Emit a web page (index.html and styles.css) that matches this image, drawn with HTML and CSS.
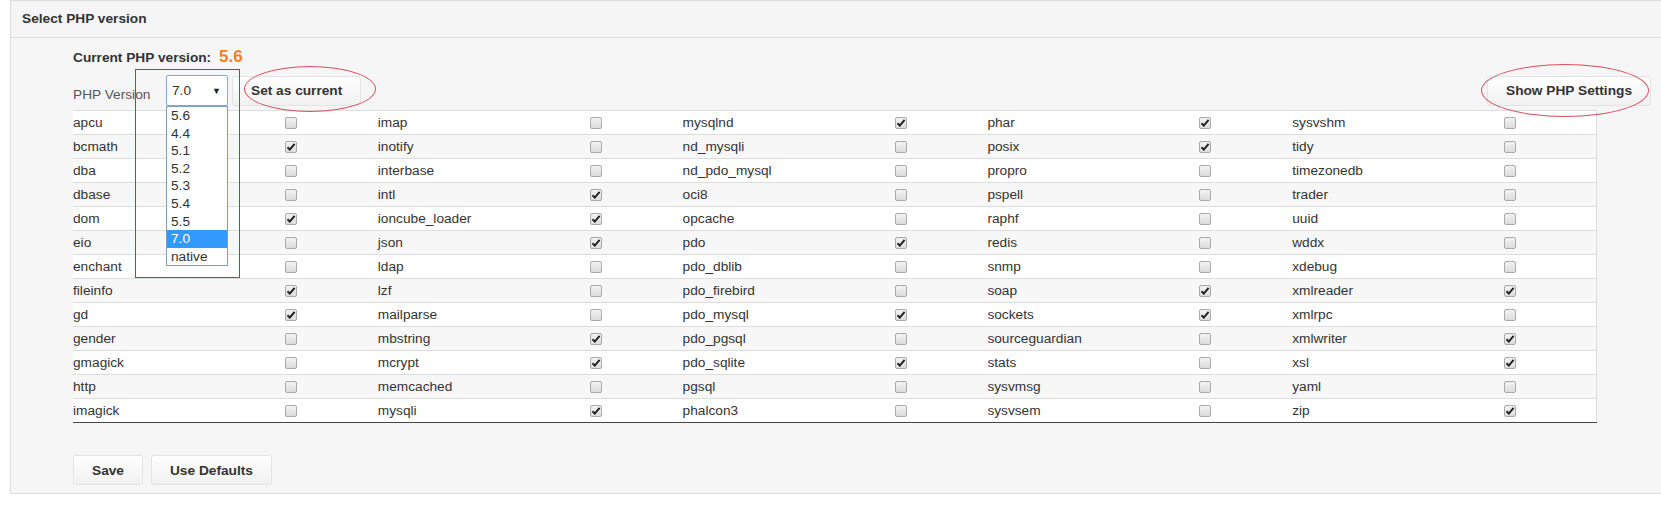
FILE: index.html
```html
<!DOCTYPE html>
<html lang="en">
<head>
  <meta charset="UTF-8">
  <meta name="viewport" content="width=device-width, initial-scale=1.0">
  <title>Select PHP version</title>
  <link rel="stylesheet" href="styles.css">
</head>
<body>
  <div class="panel">
    <div class="panelHeader">Select PHP version</div>
    <div class="panelBody">
      <div class="current">Current PHP version: <span class="currentValue">5.6</span></div>

      <div class="versionRow">
        <span class="versionLabel">PHP Version</span>
        <div class="selectBox">
          <span>7.0</span>
          <span class="arrow">&#9660;</span>
          <ul class="selectList">
            <li>5.6</li>
            <li>4.4</li>
            <li>5.1</li>
            <li>5.2</li>
            <li>5.3</li>
            <li>5.4</li>
            <li>5.5</li>
            <li class="selected">7.0</li>
            <li>native</li>
          </ul>
        </div>
        <button class="btn">Set as current</button>
        <button class="btn showSettings">Show PHP Settings</button>
        <div class="markRect"></div>
        <div class="markEllipse ellipseCurrent"></div>
        <div class="markEllipse ellipseSettings"></div>
      </div>

      <table class="extensions">
        <colgroup>
          <col class="nameCol"><col class="checkCol">
          <col class="nameCol"><col class="checkCol">
          <col class="nameCol"><col class="checkCol">
          <col class="nameCol"><col class="checkCol">
          <col class="nameCol"><col class="checkCol">
        </colgroup>
        <tbody id="extRows"></tbody>
      </table>

      <div class="actions">
        <button class="btn">Save</button>
        <button class="btn">Use Defaults</button>
      </div>
    </div>
  </div>
  <script>
    const rows = [
      [['apcu', 0], ['imap', 0], ['mysqlnd', 1], ['phar', 1], ['sysvshm', 0]],
      [['bcmath', 1], ['inotify', 0], ['nd_mysqli', 0], ['posix', 1], ['tidy', 0]],
      [['dba', 0], ['interbase', 0], ['nd_pdo_mysql', 0], ['propro', 0], ['timezonedb', 0]],
      [['dbase', 0], ['intl', 1], ['oci8', 0], ['pspell', 0], ['trader', 0]],
      [['dom', 1], ['ioncube_loader', 1], ['opcache', 0], ['raphf', 0], ['uuid', 0]],
      [['eio', 0], ['json', 1], ['pdo', 1], ['redis', 0], ['wddx', 0]],
      [['enchant', 0], ['ldap', 0], ['pdo_dblib', 0], ['snmp', 0], ['xdebug', 0]],
      [['fileinfo', 1], ['lzf', 0], ['pdo_firebird', 0], ['soap', 1], ['xmlreader', 1]],
      [['gd', 1], ['mailparse', 0], ['pdo_mysql', 1], ['sockets', 1], ['xmlrpc', 0]],
      [['gender', 0], ['mbstring', 1], ['pdo_pgsql', 0], ['sourceguardian', 0], ['xmlwriter', 1]],
      [['gmagick', 0], ['mcrypt', 1], ['pdo_sqlite', 1], ['stats', 0], ['xsl', 1]],
      [['http', 0], ['memcached', 0], ['pgsql', 0], ['sysvmsg', 0], ['yaml', 0]],
      [['imagick', 0], ['mysqli', 1], ['phalcon3', 0], ['sysvsem', 0], ['zip', 1]]
    ];
    const $body = document.getElementById('extRows');
    rows.forEach((row) => {
      const tr = document.createElement('tr');
      row.forEach(([name, on]) => {
        tr.insertAdjacentHTML('beforeend',
          '<td>' + name + '</td><td><input type="checkbox" class="chk"' + (on ? ' checked' : '') + '></td>');
      });
      $body.appendChild(tr);
    });
  </script>
</body>
</html>
```

FILE: styles.css
```css
body {
  margin: 0;
  overflow: hidden;
  font-family: "Liberation Sans", Arial, sans-serif;
  font-size: 13.7px;
  color: #333;
  background: #fff;
}

.panel {
  margin-left: 10px;
  width: 1700px;
  border: 1px solid #ddd;
  border-right: none;
  background: #f6f6f6;
}

.panelHeader {
  height: 36px;
  line-height: 36px;
  padding: 0 11px;
  font-weight: bold;
  border-bottom: 1px solid #ddd;
  background: #f5f5f5;
}

.panelBody {
  width: 1578px;
  padding: 9px 0 8px 62px;
}

.current {
  height: 20px;
  line-height: 20px;
  font-weight: bold;
}

.currentValue {
  margin-left: 4px;
  font-size: 17px;
  color: #f5801f;
}

.versionRow {
  position: relative;
  display: flex;
  align-items: center;
  height: 31px;
  margin-top: 8px;
}

.versionLabel {
  width: 93px;
  color: #555;
  padding-top: 8px;
}

.selectBox {
  position: relative;
  box-sizing: border-box;
  width: 62px;
  height: 31px;
  padding: 0 5px;
  display: flex;
  align-items: center;
  justify-content: space-between;
  border: 1px solid #7fa9dc;
  border-radius: 2px;
  background: #fff;
}

.arrow {
  font-size: 9px;
  color: #222;
  margin-right: 1px;
}

.selectList {
  position: absolute;
  top: 30px;
  left: -1px;
  width: 62px;
  box-sizing: border-box;
  margin: 0;
  padding: 0;
  list-style: none;
  border: 1px solid #7f9db9;
  background: #fff;
  z-index: 2;
}

.selectList li {
  height: 17.6px;
  line-height: 17.6px;
  padding-left: 4px;
}

.selectList .selected {
  background: #3399ff;
  color: #fff;
}

.btn {
  box-sizing: border-box;
  height: 30px;
  padding: 0 18px;
  border: 1px solid #e3e3e3;
  border-radius: 3px;
  background: linear-gradient(#fff, #f1f1f1);
  font-family: inherit;
  font-size: 13.7px;
  font-weight: bold;
  color: #333;
}

.versionRow .btn {
  margin-left: 4px;
}

.versionRow .showSettings {
  margin-left: auto;
}

.markRect {
  position: absolute;
  left: 62px;
  top: -6px;
  width: 103px;
  height: 207px;
  border: 1px solid #c9302c;
  z-index: 3;
}

.markEllipse {
  position: absolute;
  border: 1px solid #d8505c;
  border-radius: 50%;
}

.ellipseCurrent {
  left: 171px;
  top: -9px;
  width: 130px;
  height: 44px;
}

.ellipseSettings {
  left: 1408px;
  top: -11px;
  width: 166px;
  height: 51px;
}

.extensions {
  width: 1524px;
  margin-top: 4px;
  border-collapse: collapse;
  table-layout: fixed;
  border-top: 1px solid #333;
  border-bottom: 1px solid #444;
  border-right: 1px solid #ddd;
  background: #fff;
}

.nameCol {
  width: 212px;
}

.checkCol {
  width: 92.8px;
}

.extensions td {
  height: 23px;
  padding: 0;
  border-top: 1px solid #ddd;
  white-space: nowrap;
  vertical-align: middle;
}

.extensions tr:nth-child(even) td {
  background: #f7f7f7;
}

.chk {
  appearance: none;
  -webkit-appearance: none;
  display: block;
  width: 12px;
  height: 12px;
  margin: 0;
  border: 1px solid #aaa;
  border-radius: 2px;
  background: linear-gradient(#f2f2f2, #dcdcdc);
}

.chk:checked {
  background: url("data:image/svg+xml;utf8,<svg xmlns='http://www.w3.org/2000/svg' width='12' height='12'><path d='M2.5 6.2 L4.8 8.6 L9.6 2.8' fill='none' stroke='%23222' stroke-width='2'/></svg>") center no-repeat, linear-gradient(#f2f2f2, #dcdcdc);
}

.actions {
  display: flex;
  gap: 8px;
  margin-top: 32px;
}
```
